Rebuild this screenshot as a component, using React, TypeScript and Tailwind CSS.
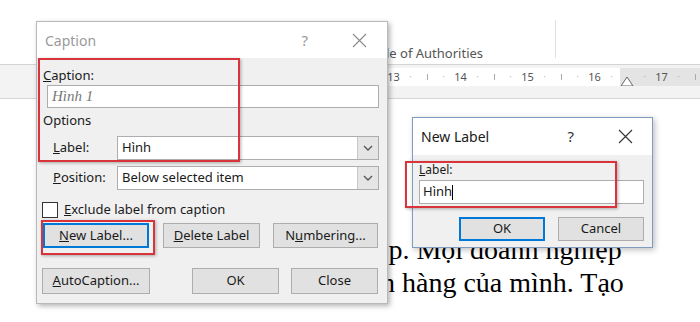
import React from 'react';

const ui = { fontFamily: '"Noto Sans", "Open Sans", Arial, sans-serif' };
const serif = { fontFamily: '"Liberation Serif", "Times New Roman", serif' };

const CloseIcon = ({ color }: { color: string }) => (
  <svg width="15" height="15" viewBox="0 0 15 15">
    <path d="M1 1 L14 14 M14 1 L1 14" stroke={color} strokeWidth="1.1" fill="none" />
  </svg>
);

const Chevron = () => (
  <svg width="10" height="6" viewBox="0 0 10 6">
    <polyline points="1,1 5,5 9,1" stroke="#555" strokeWidth="1.3" fill="none" />
  </svg>
);

const Btn = ({ children, w, focused }: { children: React.ReactNode; w: string; focused?: boolean }) => (
  <div
    className={`${w} h-full flex items-center justify-center bg-[#e1e1e1] text-[13px] text-[#1a1a1a] ${focused ? 'border-2 border-[#0078d7]' : 'border border-[#adadad]'}`}
  >
    {children}
  </div>
);

const Select = ({ value }: { value: string }) => (
  <div className="flex-1 h-full flex bg-white border border-[#adadad]">
    <div className="flex-1 flex items-center px-[4px] text-[13px] text-[#1a1a1a]">{value}</div>
    <div className="w-[21px] h-full flex items-center justify-center bg-[#e5e5e5] border-l border-[#c8c8c8]">
      <Chevron />
    </div>
  </div>
);

const Dot = () => <span className="w-[17px] shrink-0 text-center leading-[18px] text-[#aaa] text-[8px]">·</span>;
const Bar = () => (
  <span className="w-[16px] shrink-0 flex items-center justify-center">
    <span className="w-px h-[6px] bg-[#aaa]" />
  </span>
);
const Num = ({ n }: { n: number }) => <span className="w-[17px] shrink-0 text-center leading-[18px]">{n}</span>;

const Ruler = () => (
  <div className="h-[35px] bg-[#f3f3f3] border-t border-b border-[#d4d4d4] pt-[3px]">
    <div className="h-[18px] flex text-[11px] text-[#555] overflow-hidden" style={ui}>
      <div className="w-[385px] shrink-0" />
      {[13, 14, 15].map((n) => (
        <div key={n} className="w-[67px] shrink-0 h-full flex bg-white">
          <Num n={n} />
          <Dot />
          <Bar />
          <Dot />
        </div>
      ))}
      <div className="shrink-0 h-full flex bg-white">
        <Num n={16} />
        <Dot />
      </div>
      <div className="relative flex-1 min-w-0 h-full flex bg-[#e4e4e4]">
        <svg className="absolute left-[0px] top-[8px]" width="14" height="11" viewBox="0 0 14 11">
          <path d="M7 1 L13 10 L1 10 Z" fill="white" stroke="#666" strokeWidth="1" />
        </svg>
        <span className="w-[16px] shrink-0" />
        <Dot />
        <Num n={17} />
        <Dot />
        <Bar />
      </div>
    </div>
  </div>
);

const CaptionDialog = () => (
  <div
    className="absolute left-[36px] top-[21px] w-[352px] h-[283px] flex flex-col border border-[#b9b9b9] bg-[#f0f0f0] shadow-[2px_2px_5px_rgba(0,0,0,0.3)]"
    style={ui}
  >
    <div className="h-[36px] bg-white flex items-center pl-[8px] pr-[20px] text-[14px] text-[#9a9a9a]">
      <span className="flex-1">Caption</span>
      <span className="mr-[44px] text-[15px]">?</span>
      <CloseIcon color="#8a8a8a" />
    </div>
    <div className="flex-1 flex flex-col pl-[6px] pr-[8px] text-[13px] text-[#1a1a1a]">
      <div className="mt-[7px] h-[20px] leading-[20px]">
        <u>C</u>aption:
      </div>
      <div className="ml-[4px] h-[23px] bg-white border border-[#adadad] flex items-center px-[4px] text-[15px] italic text-[#777]" style={serif}>
        Hình 1
      </div>
      <div className="mt-[2px] h-[20px] leading-[20px]">Options</div>
      <div className="mt-[6px] h-[24px] flex items-center">
        <span className="w-[74px] pl-[10px]">
          <u>L</u>abel:
        </span>
        <Select value="Hình" />
      </div>
      <div className="mt-[6px] h-[24px] flex items-center">
        <span className="w-[74px] pl-[10px]">
          <u>P</u>osition:
        </span>
        <Select value="Below selected item" />
      </div>
      <div className="mt-[12px] h-[16px] flex items-center gap-[6px] ml-[-1px]">
        <span className="w-[16px] h-[16px] bg-white border border-[#333]" />
        <span>
          <u>E</u>xclude label from caption
        </span>
      </div>
      <div className="mt-[5px] h-[25px] flex">
        <Btn w="w-[106px]" focused>
          <span>
            <u>N</u>ew Label...
          </span>
        </Btn>
        <div className="w-[14px]" />
        <Btn w="w-[97px]">
          <span>
            <u>D</u>elete Label
          </span>
        </Btn>
        <div className="w-[13px]" />
        <Btn w="w-[105px]">
          <span>
            N<u>u</u>mbering...
          </span>
        </Btn>
      </div>
      <div className="mt-[20px] h-[26px] flex ml-[-1px]">
        <Btn w="w-[108px]">
          <span>
            <u>A</u>utoCaption...
          </span>
        </Btn>
        <div className="w-[42px]" />
        <Btn w="w-[87px]">OK</Btn>
        <div className="w-[12px]" />
        <Btn w="w-[87px]">Close</Btn>
      </div>
    </div>
    <div className="absolute left-[1px] top-[36px] w-[202px] h-[104px] border-2 border-[#d9343b] shadow-[1px_1px_3px_rgba(0,0,0,0.3)]" />
    <div className="absolute left-[4px] top-[198px] w-[114px] h-[35px] border-2 border-[#d9343b] shadow-[1px_1px_3px_rgba(0,0,0,0.3)]" />
  </div>
);

const NewLabelDialog = () => (
  <div
    className="absolute left-[412px] top-[117px] w-[241px] h-[131px] flex flex-col border border-[#7f9cc0] bg-[#f0f0f0] shadow-[2px_2px_6px_rgba(0,0,0,0.25)]"
    style={ui}
  >
    <div className="h-[37px] bg-white flex items-center pl-[8px] pr-[19px] text-[14px] text-[#1a1a1a]">
      <span className="flex-1">New Label</span>
      <span className="mr-[44px] text-[15px] text-[#333]">?</span>
      <CloseIcon color="#333" />
    </div>
    <div className="flex-1 flex flex-col pl-[6px] pr-[8px] text-[13px] text-[#1a1a1a]">
      <div className="mt-[5px] h-[20px] leading-[20px] text-[12px]">
        <u>L</u>abel:
      </div>
      <div className="h-[24px] bg-white border border-[#adadad] flex items-center px-[3px]">
        <span>Hình</span>
        <span className="w-px h-[15px] bg-black" />
      </div>
      <div className="mt-[13px] h-[24px] flex justify-end">
        <Btn w="w-[86px]" focused>
          OK
        </Btn>
        <div className="w-[13px]" />
        <Btn w="w-[86px]">Cancel</Btn>
      </div>
    </div>
    <div className="absolute left-[-8px] top-[43px] w-[212px] h-[47px] border-2 border-[#d9343b] shadow-[1px_1px_3px_rgba(0,0,0,0.3)]" />
  </div>
);

export default function App() {
  return (
    <div className="relative w-[700px] h-[322px] bg-white overflow-hidden">
      <div className="flex flex-col">
        <div className="h-[64px] flex">
          <div className="w-[386px]" />
          <div className="w-[169px] flex items-end pb-[1px] text-[13px] text-[#555] leading-[20px]" style={ui}>
            le of Authorities
          </div>
          <div className="mt-[20px] h-[38px] w-px bg-[#e2e2e2]" />
        </div>
        <Ruler />
        <div className="pt-[134px] text-[28px] leading-[33px] text-black whitespace-nowrap" style={serif}>
          <div className="pl-[376px]">ệp. Mọi doanh nghiệp</div>
          <div className="pl-[381px]">h hàng của mình. Tạo</div>
        </div>
      </div>
      <CaptionDialog />
      <NewLabelDialog />
    </div>
  );
}
